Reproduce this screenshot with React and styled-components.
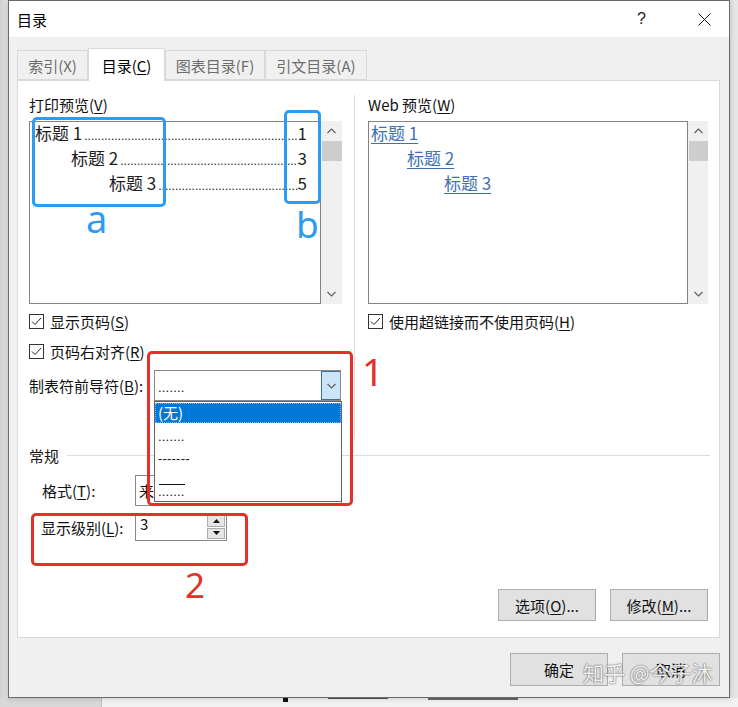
import React from "react";
import styled, { createGlobalStyle } from "styled-components";

const GlobalStyle = createGlobalStyle`
  html, body { margin: 0; padding: 0; }
  body {
    background: #e4e4e4;
    font-family: "Noto Sans CJK SC", "Noto Sans", sans-serif;
    width: 738px;
    height: 707px;
    overflow: hidden;
  }
  u { text-decoration: underline; text-underline-offset: 2px; }
`;

const Desktop = styled.div`
  width: 738px;
  height: 707px;
  display: flex;
  flex-direction: column;
  background: linear-gradient(90deg, #d0d0d0 0px, #e6e6e6 8px);
`;

const Dialog = styled.div`
  position: relative;
  margin-left: 8px;
  width: 722px;
  height: 698px;
  box-sizing: border-box;
  border: 1px solid #6a6a6a;
  background: #f0f0f0;
  display: flex;
  flex-direction: column;
  box-shadow: 0 0 6px rgba(0,0,0,0.2);
`;

const BelowStrip = styled.div`
  height: 9px;
  display: flex;
  overflow: hidden;
`;
const StripLeft = styled.div`
  width: 101px;
  background: #d8d8d8;
  border-right: 1px solid #bcbcbc;
`;
const StripRight = styled.div`
  flex: 1;
  background: #f2f2f2;
  display: flex;
  align-items: flex-start;
  padding-left: 181px;
  gap: 40px;
`;
const Frag = styled.span`
  width: ${p => p.$w}px;
  height: ${p => p.$h}px;
  background: ${p => p.$c};
`;

const TitleBar = styled.div`
  height: 36px;
  background: #ffffff;
  display: flex;
  align-items: center;
  padding: 0 18px 0 8px;
  font-size: 15px;
  color: #000;
`;
const Title = styled.div`
  flex: 1;
`;
const Help = styled.div`
  font-size: 16px;
  font-family: "Liberation Sans", sans-serif;
  color: #222;
  margin-right: 52px;
  font-weight: 300;
`;

const Body = styled.div`
  flex: 1;
  display: flex;
  flex-direction: column;
  padding: 11px 9px 0 8px;
`;

const TabRow = styled.div`
  display: flex;
  align-items: flex-end;
  height: 32px;
`;
const Tab = styled.div`
  width: ${p => p.$w}px;
  box-sizing: border-box;
  height: ${p => (p.$active ? 33 : 30)}px;
  margin-bottom: ${p => (p.$active ? -1 : 0)}px;
  background: ${p => (p.$active ? "#ffffff" : "#f0f0f0")};
  border: 1px solid #d9d9d9;
  border-bottom: ${p => (p.$active ? "none" : "1px solid #d9d9d9")};
  color: ${p => (p.$active ? "#000" : "#6d6d6d")};
  font-size: 15px;
  display: flex;
  align-items: center;
  justify-content: center;
  position: relative;
  z-index: ${p => (p.$active ? 2 : 1)};
`;

const Panel = styled.div`
  position: relative;
  height: 558px;
  box-sizing: border-box;
  background: #ffffff;
  border: 1px solid #d9d9d9;
  padding: 0 9px 0 11px;
  display: flex;
  flex-direction: column;
  font-size: 15px;
  color: #111;
`;

const TopSection = styled.div`
  display: flex;
  margin-top: 14px;
`;
const Column = styled.div`
  width: ${p => p.$w}px;
  display: flex;
  flex-direction: column;
  padding-bottom: ${p => p.$pb || 0}px;
`;
const Separator = styled.div`
  width: 1px;
  background: #dcdcdc;
  margin: 0 13px 0 12px;
`;
const Label = styled.div`
  height: 20px;
  line-height: 20px;
  font-size: 15px;
  white-space: nowrap;
`;
const PreviewWrap = styled.div`
  display: flex;
  margin-top: 6px;
  height: 183px;
`;
const PreviewBox = styled.div`
  flex: 1;
  border: 1px solid #838383;
  background: #fff;
  overflow: hidden;
`;
const PreviewLines = styled.div`
  margin-top: -2px;
`;
const ScrollBar = styled.div`
  width: ${p => p.$w}px;
  background: #f0f0f0;
  display: flex;
  flex-direction: column;
`;
const ScrollArrow = styled.div`
  height: 20px;
  display: flex;
  align-items: center;
  justify-content: center;
`;
const Thumb = styled.div`
  height: 20px;
  margin-left: 1px;
  background: #cdcdcd;
`;
const ScrollTrack = styled.div`
  flex: 1;
`;

const TocLine = styled.div`
  display: flex;
  align-items: baseline;
  height: 25px;
  line-height: 25px;
  padding-left: ${p => p.$indent}px;
  padding-right: 13px;
  font-size: 17px;
  color: #1e1e1e;
  white-space: nowrap;
`;
const Leader = styled.span`
  flex: 1;
  overflow: hidden;
  white-space: nowrap;
  font-family: "Liberation Sans", sans-serif;
  font-size: 12px;
  color: #111;
  margin-left: 2px;
`;
const LinkLine = styled.div`
  height: 25px;
  line-height: 25px;
  padding-left: ${p => p.$indent}px;
  font-size: 17px;
`;
const Link = styled.span`
  color: #3f70b3;
  text-decoration: underline;
  text-underline-offset: 3px;
  text-decoration-thickness: 1px;
`;

const CheckRow = styled.div`
  display: flex;
  align-items: center;
  height: 22px;
  gap: 6px;
  margin-top: ${p => p.$mt}px;
  white-space: nowrap;
`;
const CheckBox = styled.div`
  width: 15px;
  height: 15px;
  box-sizing: border-box;
  border: 1px solid #333;
  background: #fff;
  display: flex;
  align-items: center;
  justify-content: center;
`;

const FieldRow = styled.div`
  display: flex;
  align-items: center;
  height: ${p => p.$h}px;
  margin-top: ${p => p.$mt}px;
  padding-left: ${p => p.$pl || 0}px;
  white-space: nowrap;
`;
const FieldLabel = styled.div`
  width: ${p => p.$w}px;
`;
const ComboWrap = styled.div`
  position: relative;
  width: ${p => p.$w}px;
  height: 100%;
`;
const Combo = styled.div`
  height: 100%;
  box-sizing: border-box;
  border: 1px solid #8a8a8a;
  background: #fff;
  display: flex;
  align-items: center;
  padding-left: 3px;
  overflow: hidden;
  font-size: 15px;
`;
const ComboText = styled.span`
  flex: 1;
`;
const ComboButton = styled.div`
  width: 20px;
  height: 100%;
  box-sizing: border-box;
  background: #cce4f7;
  border: 1px solid #3c6e96;
  margin-right: -1px;
  display: flex;
  align-items: center;
  justify-content: center;
`;
const DotsText = styled.span`
  font-family: "Liberation Sans", sans-serif;
  font-size: 13px;
  letter-spacing: 0.2px;
  color: #111;
`;
const DropList = styled.div`
  position: absolute;
  top: 100%;
  left: 0;
  width: 188px;
  height: 101px;
  box-sizing: border-box;
  border: 1px solid #646464;
  background: #fff;
  z-index: 5;
  overflow: hidden;
  padding-top: 1px;
`;
const DropItem = styled.div`
  height: ${p => p.$h}px;
  line-height: ${p => p.$lh || p.$h}px;
  padding-left: 3px;
  background: ${p => (p.$sel ? "#0078d7" : "transparent")};
  color: ${p => (p.$sel ? "#fff" : "#111")};
  outline: ${p => (p.$sel ? "1px dotted #7fb6e8" : "none")};
  outline-offset: -1px;
  font-size: 15px;
  overflow: hidden;
  white-space: nowrap;
`;
const LineItem = styled.div`
  height: ${p => p.$h}px;
  display: flex;
  align-items: flex-end;
  padding: 0 0 2px 4px;
  box-sizing: border-box;
`;
const SolidLine = styled.div`
  width: 26px;
  border-top: 1px solid #111;
`;

const Heading = styled.div`
  display: flex;
  align-items: center;
  height: 20px;
  margin-top: 6px;
`;
const HeadingLine = styled.div`
  flex: 1;
  height: 1px;
  background: #dcdcdc;
  margin-left: 8px;
`;

const SpinBox = styled.div`
  width: 92px;
  height: 100%;
  box-sizing: border-box;
  border: 1px solid #8a8a8a;
  background: #fff;
  display: flex;
  justify-content: space-between;
  padding: 1px 1px 1px 4px;
`;
const SpinValue = styled.span`
  font-size: 15px;
  line-height: 18px;
`;
const SpinButtons = styled.div`
  display: flex;
  flex-direction: column;
  gap: 1px;
  width: 18px;
`;
const SpinButton = styled.div`
  flex: 1;
  background: #e6e6e6;
  border: 1px solid #adadad;
  display: flex;
  align-items: center;
  justify-content: center;
`;

const ButtonRow = styled.div`
  display: flex;
  justify-content: flex-end;
  gap: 14px;
  margin-top: ${p => p.$mt}px;
  padding-right: ${p => p.$pr}px;
`;
const Button = styled.div`
  width: 98px;
  height: ${p => p.$h}px;
  box-sizing: border-box;
  background: #e1e1e1;
  border: 1px solid #adadad;
  display: flex;
  align-items: center;
  justify-content: center;
  font-size: 15px;
  color: #111;
`;

const Note = styled.div`
  position: absolute;
  left: ${p => p.$x}px;
  top: ${p => p.$y}px;
  width: ${p => p.$w}px;
  height: ${p => p.$h}px;
  box-sizing: border-box;
  border: 3px solid ${p => p.$c};
  border-radius: 5px;
  pointer-events: none;
  z-index: 10;
`;
const NoteText = styled.div`
  position: absolute;
  left: ${p => p.$x}px;
  top: ${p => p.$y}px;
  font-family: "Noto Sans", sans-serif;
  font-size: ${p => p.$s}px;
  line-height: 1;
  color: ${p => p.$c};
  z-index: 10;
`;

const Watermark = styled.div`
  position: absolute;
  left: 574px;
  top: 657px;
  font-size: 21px;
  line-height: 28px;
  color: rgba(255, 255, 255, 0.92);
  text-shadow: 0 0 2px rgba(0,0,0,0.55), 0 0 1px rgba(0,0,0,0.4);
  white-space: nowrap;
  z-index: 10;
`;

const Chevron = ({ up }) => (
  <svg width="9" height="6" viewBox="0 0 9 6">
    <polyline
      points={up ? "0.5,5 4.5,1 8.5,5" : "0.5,1 4.5,5 8.5,1"}
      fill="none"
      stroke="#606060"
      strokeWidth="1.2"
    />
  </svg>
);

const Tick = () => (
  <svg width="13" height="13" viewBox="0 0 13 13">
    <polyline points="2,6.5 5,9.5 11,3" fill="none" stroke="#222" strokeWidth="1" />
  </svg>
);

const Tri = ({ up }) => (
  <svg width="7" height="4" viewBox="0 0 7 4">
    <polygon points={up ? "0,4 3.5,0 7,4" : "0,0 3.5,4 7,0"} fill="#111" />
  </svg>
);

const CloseX = () => (
  <svg width="13" height="13" viewBox="0 0 13 13">
    <path d="M0.5 0.5 L12.5 12.5 M12.5 0.5 L0.5 12.5" stroke="#111" strokeWidth="1" fill="none" />
  </svg>
);

const Scroll = ({ w }) => (
  <ScrollBar $w={w}>
    <ScrollArrow><Chevron up /></ScrollArrow>
    <Thumb />
    <ScrollTrack />
    <ScrollArrow><Chevron /></ScrollArrow>
  </ScrollBar>
);

const dots = ".".repeat(120);

const tocEntries = [
  { t: "标题 1", n: "1", indent: 5 },
  { t: "标题 2", n: "3", indent: 41 },
  { t: "标题 3", n: "5", indent: 79 },
];

export default function App() {
  return (
    <>
      <GlobalStyle />
      <Desktop>
        <Dialog>
          <TitleBar>
            <Title>目录</Title>
            <Help>?</Help>
            <CloseX />
          </TitleBar>
          <Body>
            <TabRow>
              <Tab $w={71}>索引(X)</Tab>
              <Tab $w={77} $active>目录(<u>C</u>)</Tab>
              <Tab $w={100}>图表目录(F)</Tab>
              <Tab $w={102}>引文目录(A)</Tab>
            </TabRow>
            <Panel>
              <TopSection>
                <Column $w={313} $pb={38}>
                  <Label>打印预览(<u>V</u>)</Label>
                  <PreviewWrap>
                    <PreviewBox>
                      <PreviewLines>
                        {tocEntries.map(e => (
                          <TocLine key={e.n} $indent={e.indent}>
                            <span>{e.t}</span>
                            <Leader>{dots}</Leader>
                            <span>{e.n}</span>
                          </TocLine>
                        ))}
                      </PreviewLines>
                    </PreviewBox>
                    <Scroll w={21} />
                  </PreviewWrap>
                  <CheckRow $mt={6}>
                    <CheckBox><Tick /></CheckBox>
                    <span>显示页码(<u>S</u>)</span>
                  </CheckRow>
                  <CheckRow $mt={8}>
                    <CheckBox><Tick /></CheckBox>
                    <span>页码右对齐(<u>R</u>)</span>
                  </CheckRow>
                  <FieldRow $h={31} $mt={8}>
                    <FieldLabel $w={125}>制表符前导符(<u>B</u>):</FieldLabel>
                    <ComboWrap $w={187}>
                      <Combo>
                        <ComboText><DotsText>.......</DotsText></ComboText>
                        <ComboButton><Chevron /></ComboButton>
                      </Combo>
                      <DropList>
                        <DropItem $h={20} $sel>(无)</DropItem>
                        <DropItem $h={23}><DotsText>.......</DotsText></DropItem>
                        <DropItem $h={22}><DotsText>-------</DotsText></DropItem>
                        <LineItem $h={19}><SolidLine /></LineItem>
                        <DropItem $h={14} $lh={6}><DotsText>.......</DotsText></DropItem>
                      </DropList>
                    </ComboWrap>
                  </FieldRow>
                </Column>
                <Separator />
                <Column $w={340}>
                  <Label>Web 预览(<u>W</u>)</Label>
                  <PreviewWrap>
                    <PreviewBox>
                      <PreviewLines>
                        <LinkLine $indent={2}><Link>标题 1</Link></LinkLine>
                        <LinkLine $indent={38}><Link>标题 2</Link></LinkLine>
                        <LinkLine $indent={75}><Link>标题 3</Link></LinkLine>
                      </PreviewLines>
                    </PreviewBox>
                    <Scroll w={20} />
                  </PreviewWrap>
                  <CheckRow $mt={6}>
                    <CheckBox><Tick /></CheckBox>
                    <span>使用超链接而不使用页码(<u>H</u>)</span>
                  </CheckRow>
                </Column>
              </TopSection>

              <Heading>
                <span>常规</span>
                <HeadingLine />
              </Heading>
              <FieldRow $h={31} $mt={10} $pl={13}>
                <FieldLabel $w={93}>格式(<u>T</u>):</FieldLabel>
                <ComboWrap $w={207}>
                  <Combo><ComboText>来自模板</ComboText></Combo>
                </ComboWrap>
              </FieldRow>
              <FieldRow $h={28} $mt={7} $pl={12}>
                <FieldLabel $w={94}>显示级别(<u>L</u>):</FieldLabel>
                <SpinBox>
                  <SpinValue>3</SpinValue>
                  <SpinButtons>
                    <SpinButton><Tri up /></SpinButton>
                    <SpinButton><Tri /></SpinButton>
                  </SpinButtons>
                </SpinBox>
              </FieldRow>
              <ButtonRow $mt={48} $pr={2}>
                <Button $h={32}>选项(<u>O</u>)...</Button>
                <Button $h={32}>修改(<u>M</u>)...</Button>
              </ButtonRow>

              <Note $x={14} $y={36} $w={134} $h={90} $c="#2d9cf0" />
              <Note $x={266} $y={29} $w={37} $h={94} $c="#2d9cf0" />
              <NoteText $x={68} $y={118} $s={38} $c="#2d9cf0">a</NoteText>
              <NoteText $x={278} $y={124} $s={37} $c="#2d9cf0">b</NoteText>
              <Note $x={129} $y={270} $w={206} $h={155} $c="#e5302a" />
              <NoteText $x={344} $y={271} $s={38} $c="#e5302a">1</NoteText>
              <Note $x={13} $y={432} $w={217} $h={53} $c="#e5302a" />
              <NoteText $x={167} $y={486} $s={35} $c="#e5302a">2</NoteText>
            </Panel>
            <ButtonRow $mt={15} $pr={0}>
              <Button $h={33}>确定</Button>
              <Button $h={33}>取消</Button>
            </ButtonRow>
          </Body>
          <Watermark>知乎 @今子沐</Watermark>
        </Dialog>
        <BelowStrip>
          <StripLeft />
          <StripRight>
            <Frag $w={5} $h={4} $c="#111" />
            <Frag $w={60} $h={1} $c="#555" />
            <Frag $w={90} $h={2} $c="#666" />
          </StripRight>
        </BelowStrip>
      </Desktop>
    </>
  );
}
